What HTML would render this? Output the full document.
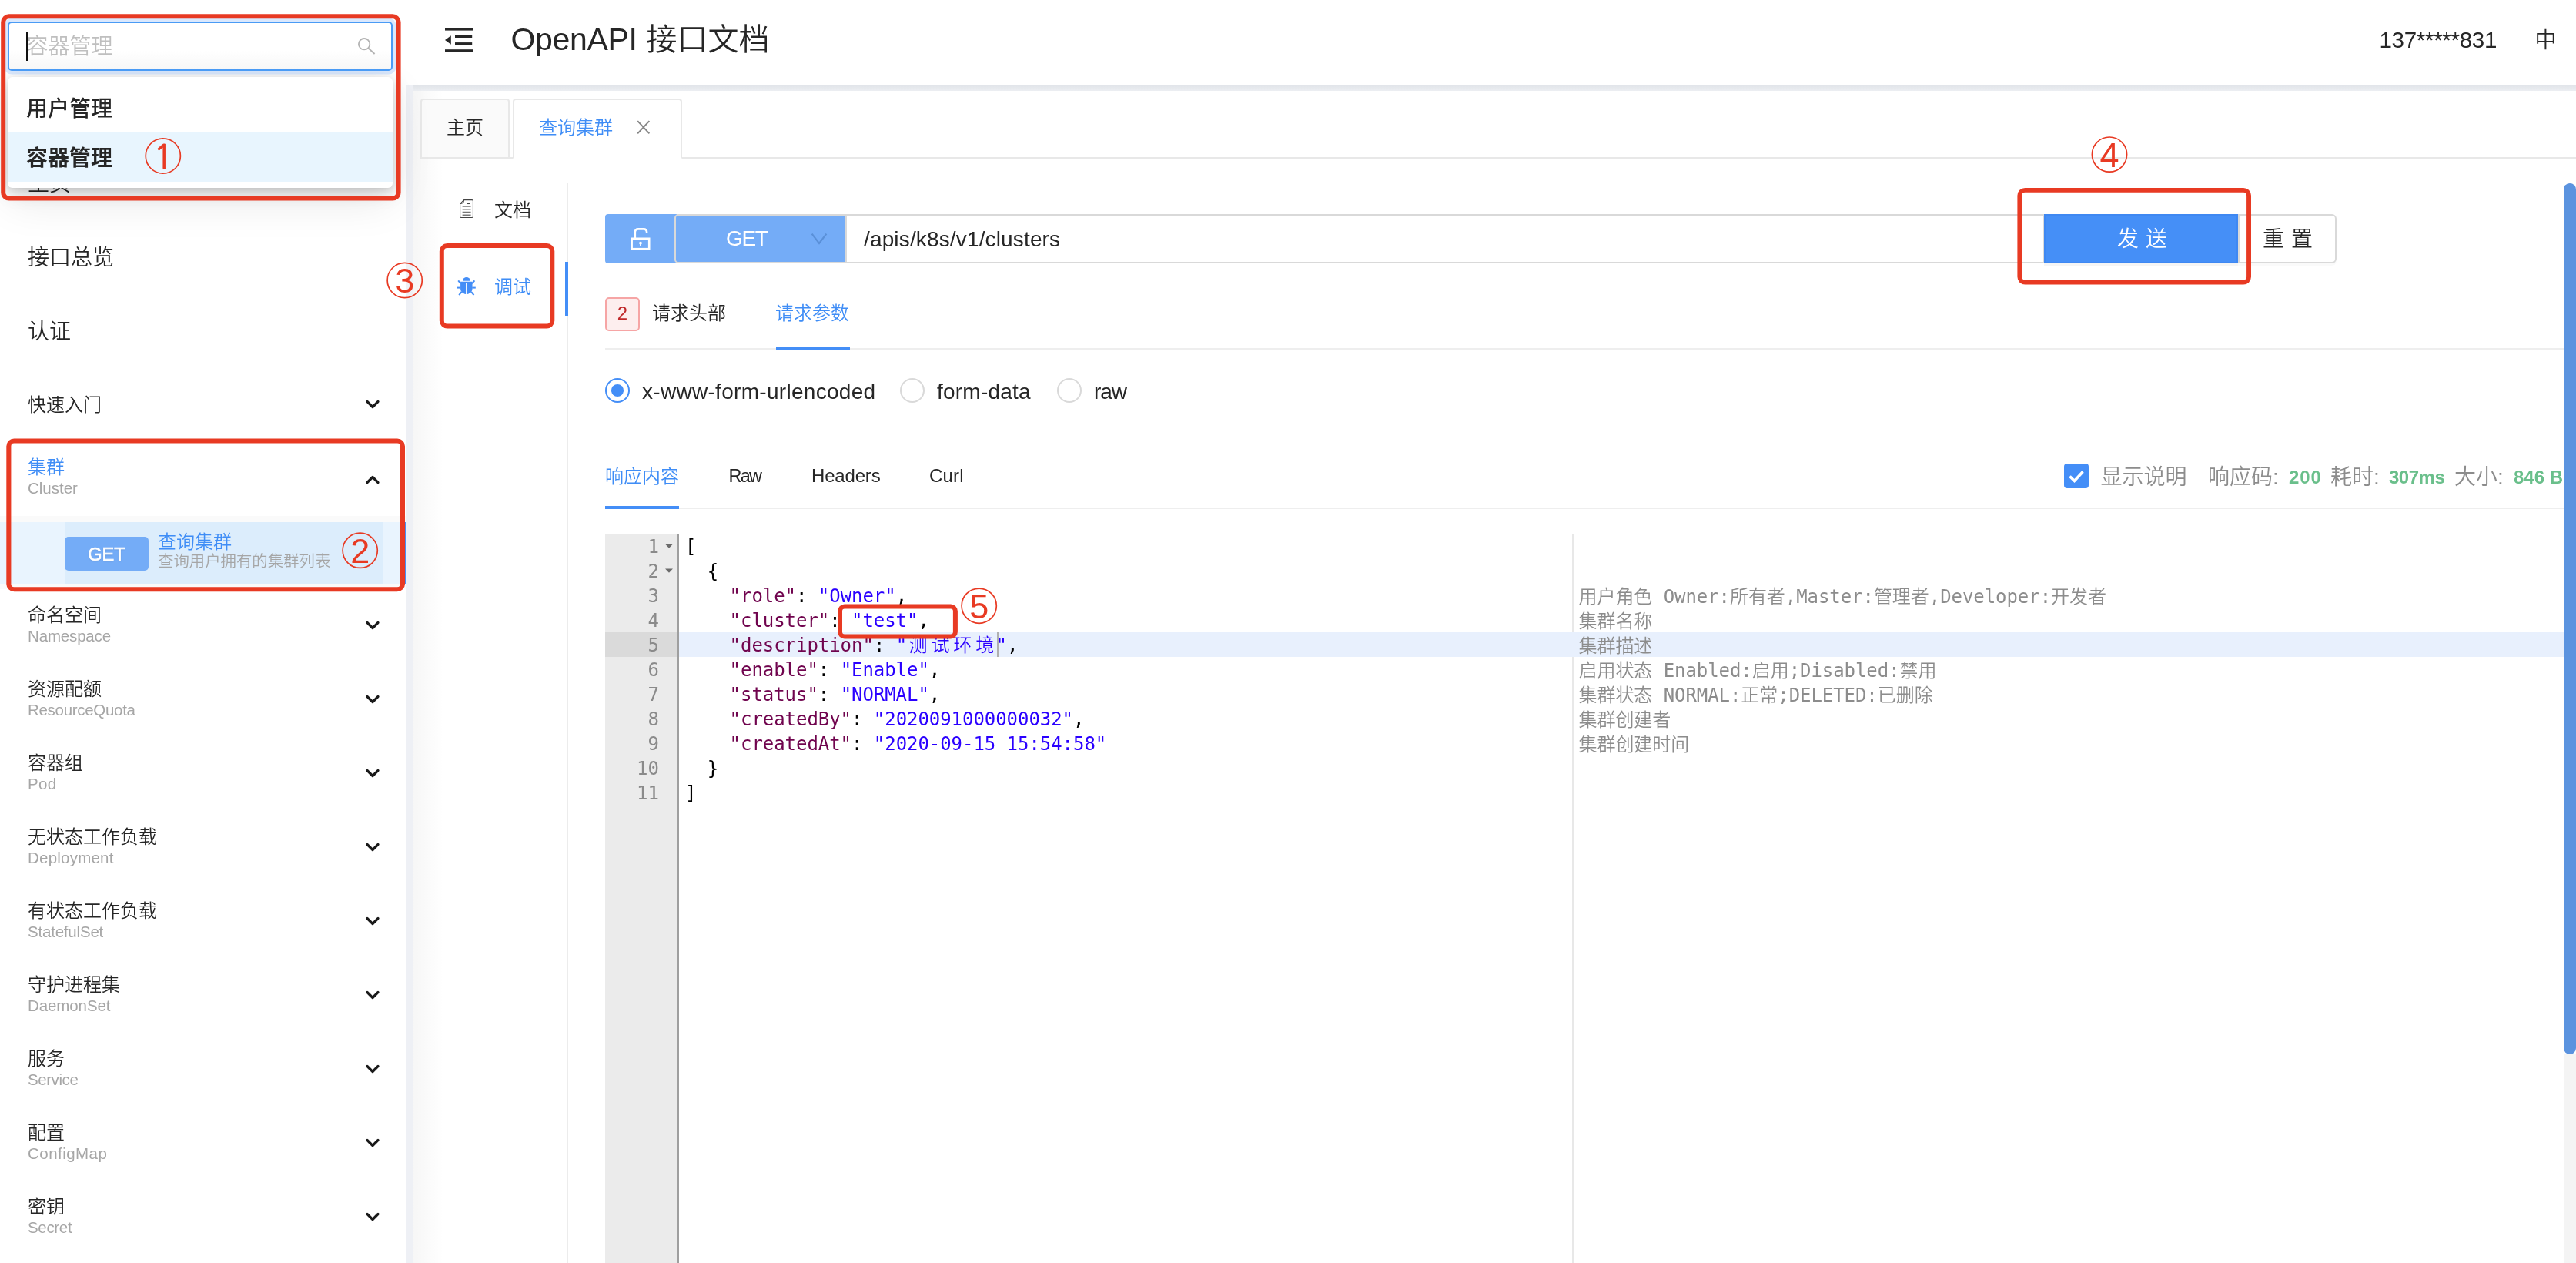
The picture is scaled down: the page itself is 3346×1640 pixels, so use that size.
<!DOCTYPE html>
<html lang="zh-CN">
<head>
<meta charset="utf-8">
<title>OpenAPI 接口文档</title>
<style>
*{box-sizing:border-box;margin:0;padding:0}
html,body{width:3346px;height:1640px;overflow:hidden;background:#fff}
#root{position:absolute;left:0;top:0;width:3346px;height:1640px;will-change:transform;font-weight:350}
body{position:relative;font-family:"Liberation Sans","Noto Sans CJK SC",sans-serif;color:#262626}
.a{position:absolute;white-space:nowrap}
.t{position:absolute;white-space:nowrap;line-height:1}
.blue{color:#3f8df6}
.red{color:#e83a23}
/* layout blocks */
#side{left:0;top:0;width:528px;height:1640px;background:#fff}
#gutterv{left:528px;top:110px;width:8px;height:1530px;background:#eef0f5}
#hdr{left:528px;top:0;width:2818px;height:110px;background:#fff}
#hstrip{left:528px;top:110px;width:2818px;height:8px;background:linear-gradient(#e0e3e8,#eceef2)}
#card{left:536px;top:118px;width:2810px;height:1522px;background:#fff}
.mt{font-size:24px;color:#262626}
.ms{font-size:20px;color:#a6a6a6}
.rbox{position:absolute;border:7px solid #e83a23;border-radius:11px}
.ln{font-size:24px;line-height:32px;color:#8a8a8a}
.cl{font-size:24px;line-height:32px;color:#000;white-space:pre;letter-spacing:-0.05px;font-family:"DejaVu Sans Mono","Noto Sans CJK SC",monospace}
.cj{display:inline-block;width:28.9px;text-align:center}
.ds{font-size:24px;line-height:32px;color:#8c8c8c;letter-spacing:-0.06px}
.mono{font-family:"DejaVu Sans Mono","Noto Sans CJK SC",monospace}
</style>
</head>
<body>
<div id="root">
<div class="a" id="side"></div>
<div class="a" id="hdr"></div>
<div class="a" id="hstrip"></div>
<div class="a" id="gutterv"></div>
<div class="a" id="card"></div>
<!--SIDEBAR-->
<div class="t " style="left:36px;top:217.9px;font-size:28px;line-height:42px;">主页</div>
<div class="t " style="left:36px;top:313.9px;font-size:28px;line-height:42px;">接口总览</div>
<div class="t " style="left:36px;top:409.9px;font-size:28px;line-height:42px;">认证</div>
<div class="t " style="left:36px;top:507.5px;font-size:24px;line-height:36px;">快速入门</div>
<svg class="a" style="left:474px;top:518px" width="20" height="14" viewBox="0 0 20 14"><path d="M3 3.5 L10 10.5 L17 3.5" fill="none" stroke="#1a1a1a" stroke-width="3.2" stroke-linecap="round" stroke-linejoin="round"/></svg>
<div class="t blue" style="left:36px;top:589.3px;font-size:24px;line-height:36px;">集群</div>
<div class="t ms" style="left:36px;top:617.8px;font-size:20.5px;line-height:31px;">Cluster</div>
<svg class="a" style="left:474px;top:616px" width="20" height="14" viewBox="0 0 20 14"><path d="M3 10.5 L10 3.5 L17 10.5" fill="none" stroke="#1a1a1a" stroke-width="3.2" stroke-linecap="round" stroke-linejoin="round"/></svg>
<div class="a" style="left:0;top:670px;width:528px;height:95px;background:#fafafa"></div>
<div class="a" style="left:0;top:678px;width:528px;height:80px;background:#e9f4fe;border-right:3px solid #4a8ff5"></div>
<div class="a" style="left:84px;top:678px;width:414px;height:80px;background:#dcedfc"></div>
<div class="a" style="left:84px;top:697px;width:109px;height:44px;background:#74acf7;border-radius:5px;color:#fff;font-size:23.5px;font-weight:400;-webkit-text-stroke:0.7px #fff;line-height:44px;text-align:center;padding-top:1px;text-shadow:0 1px 2px rgba(0,0,0,.15)">GET</div>
<div class="t blue" style="left:205px;top:685.5px;font-size:24px;line-height:36px;">查询集群</div>
<div class="t ms" style="left:205px;top:713.5px;font-size:20.4px;line-height:31px;">查询用户拥有的集群列表</div>
<div class="t " style="left:36px;top:781.3px;font-size:24px;line-height:36px;">命名空间</div>
<div class="t ms" style="left:36px;top:809.8px;font-size:20.5px;line-height:31px;letter-spacing:-0.16px">Namespace</div>
<svg class="a" style="left:474px;top:805px" width="20" height="14" viewBox="0 0 20 14"><path d="M3 3.5 L10 10.5 L17 3.5" fill="none" stroke="#1a1a1a" stroke-width="3.2" stroke-linecap="round" stroke-linejoin="round"/></svg>
<div class="t " style="left:36px;top:877.3px;font-size:24px;line-height:36px;">资源配额</div>
<div class="t ms" style="left:36px;top:905.8px;font-size:20.5px;line-height:31px;letter-spacing:-0.3px">ResourceQuota</div>
<svg class="a" style="left:474px;top:901px" width="20" height="14" viewBox="0 0 20 14"><path d="M3 3.5 L10 10.5 L17 3.5" fill="none" stroke="#1a1a1a" stroke-width="3.2" stroke-linecap="round" stroke-linejoin="round"/></svg>
<div class="t " style="left:36px;top:973.3px;font-size:24px;line-height:36px;">容器组</div>
<div class="t ms" style="left:36px;top:1001.8px;font-size:20.5px;line-height:31px;letter-spacing:0.3px">Pod</div>
<svg class="a" style="left:474px;top:997px" width="20" height="14" viewBox="0 0 20 14"><path d="M3 3.5 L10 10.5 L17 3.5" fill="none" stroke="#1a1a1a" stroke-width="3.2" stroke-linecap="round" stroke-linejoin="round"/></svg>
<div class="t " style="left:36px;top:1069.3px;font-size:24px;line-height:36px;">无状态工作负载</div>
<div class="t ms" style="left:36px;top:1097.8px;font-size:20.5px;line-height:31px;letter-spacing:0.22px">Deployment</div>
<svg class="a" style="left:474px;top:1093px" width="20" height="14" viewBox="0 0 20 14"><path d="M3 3.5 L10 10.5 L17 3.5" fill="none" stroke="#1a1a1a" stroke-width="3.2" stroke-linecap="round" stroke-linejoin="round"/></svg>
<div class="t " style="left:36px;top:1165.3px;font-size:24px;line-height:36px;">有状态工作负载</div>
<div class="t ms" style="left:36px;top:1193.8px;font-size:20.5px;line-height:31px;letter-spacing:-0.2px">StatefulSet</div>
<svg class="a" style="left:474px;top:1189px" width="20" height="14" viewBox="0 0 20 14"><path d="M3 3.5 L10 10.5 L17 3.5" fill="none" stroke="#1a1a1a" stroke-width="3.2" stroke-linecap="round" stroke-linejoin="round"/></svg>
<div class="t " style="left:36px;top:1261.3px;font-size:24px;line-height:36px;">守护进程集</div>
<div class="t ms" style="left:36px;top:1289.8px;font-size:20.5px;line-height:31px;letter-spacing:-0.1px">DaemonSet</div>
<svg class="a" style="left:474px;top:1285px" width="20" height="14" viewBox="0 0 20 14"><path d="M3 3.5 L10 10.5 L17 3.5" fill="none" stroke="#1a1a1a" stroke-width="3.2" stroke-linecap="round" stroke-linejoin="round"/></svg>
<div class="t " style="left:36px;top:1357.3px;font-size:24px;line-height:36px;">服务</div>
<div class="t ms" style="left:36px;top:1385.8px;font-size:20.5px;line-height:31px;letter-spacing:-0.43px">Service</div>
<svg class="a" style="left:474px;top:1381px" width="20" height="14" viewBox="0 0 20 14"><path d="M3 3.5 L10 10.5 L17 3.5" fill="none" stroke="#1a1a1a" stroke-width="3.2" stroke-linecap="round" stroke-linejoin="round"/></svg>
<div class="t " style="left:36px;top:1453.3px;font-size:24px;line-height:36px;">配置</div>
<div class="t ms" style="left:36px;top:1481.8px;font-size:20.5px;line-height:31px;letter-spacing:0.46px">ConfigMap</div>
<svg class="a" style="left:474px;top:1477px" width="20" height="14" viewBox="0 0 20 14"><path d="M3 3.5 L10 10.5 L17 3.5" fill="none" stroke="#1a1a1a" stroke-width="3.2" stroke-linecap="round" stroke-linejoin="round"/></svg>
<div class="t " style="left:36px;top:1549.3px;font-size:24px;line-height:36px;">密钥</div>
<div class="t ms" style="left:36px;top:1577.8px;font-size:20.5px;line-height:31px;letter-spacing:-0.32px">Secret</div>
<svg class="a" style="left:474px;top:1573px" width="20" height="14" viewBox="0 0 20 14"><path d="M3 3.5 L10 10.5 L17 3.5" fill="none" stroke="#1a1a1a" stroke-width="3.2" stroke-linecap="round" stroke-linejoin="round"/></svg>
<!--/SIDEBAR-->
<!--HEADER-->
<svg class="a" style="left:576px;top:34px" width="40" height="36" viewBox="0 0 40 36"><g fill="#262626"><rect x="2" y="2" width="36" height="3.6"/><rect x="15" y="11.8" width="22.2" height="3.2"/><rect x="15" y="21.1" width="22.2" height="3.2"/><rect x="2" y="30.2" width="36" height="3.6"/><path d="M2 18 L9.8 12.3 L9.8 23.8 Z"/></g></svg>
<div class="t" style="left:663.5px;top:21px;font-size:40px;line-height:60px;color:#262626"><span style="letter-spacing:-0.35px;font-size:41px">OpenAPI</span> <span style="margin-left:1px">接口文档</span></div>
<div class="t" style="left:3090.5px;top:30.5px;font-size:29.5px;line-height:42px;color:#262626;letter-spacing:-0.3px">137*****831</div>
<div class="t" style="left:3292.5px;top:32px;font-size:28px;line-height:42px;color:#262626">中</div>

<!--/HEADER-->
<!--TABS-->
<div class="a" id="cardshade" style="left:536px;top:118px;width:40px;height:1522px;background:linear-gradient(90deg,rgba(0,0,0,.035),rgba(0,0,0,0))"></div>
<div class="a" style="left:546px;top:204px;width:2800px;height:2px;background:#e8e8e8"></div>
<div class="a" style="left:546px;top:128px;width:116px;height:78px;background:#fafafa;border:2px solid #e8e8e8;border-radius:4px 4px 0 0"></div>
<div class="t" style="left:580px;top:148px;font-size:24px;line-height:36px;color:#262626">主页</div>
<div class="a" style="left:666px;top:128px;width:220px;height:78px;background:#fff;border:2px solid #e8e8e8;border-bottom-color:#fff;border-radius:4px 4px 0 0"></div>
<div class="t blue" style="left:700px;top:148px;font-size:24px;line-height:36px">查询集群</div>
<svg class="a" style="left:826px;top:156px" width="20" height="20" viewBox="0 0 20 20"><path d="M2.2 1.1 L17.4 17.3 M17.4 1.1 L2.2 17.3" fill="none" stroke="#858585" stroke-width="1.9"/></svg>
<!-- vertical tabs -->
<div class="a" style="left:736px;top:238px;width:2px;height:1402px;background:#ececec"></div>
<div class="a" style="left:734px;top:340px;width:4px;height:70px;background:#448ef7"></div>
<svg class="a" style="left:596px;top:258px" width="20" height="26" viewBox="0 0 20 26"><path d="M6.6 1.6 H17.2 Q18.4 1.6 18.4 2.8 V23.2 Q18.4 24.4 17.2 24.4 H2.8 Q1.6 24.4 1.6 23.2 V6.6 Z" fill="none" stroke="#444" stroke-width="1.05" stroke-linejoin="round"/><path d="M6.6 1.6 Q7 6.4 1.6 6.6" fill="none" stroke="#444" stroke-width="1"/><path d="M10 6.4 H14.6" fill="none" stroke="#444" stroke-width="1.3"/><path d="M4.6 10 H15.6 M4.6 13.7 H15.6 M4.6 17.5 H15.6 M4.6 21.2 H15.6" fill="none" stroke="#777" stroke-width="1.4"/></svg>
<div class="t" style="left:642px;top:254.6px;font-size:24px;line-height:36px;color:#262626">文档</div>
<svg class="a" style="left:593px;top:359px" width="26" height="26" viewBox="0 0 26 26"><g fill="#448ef7" stroke="none"><path d="M8.2 5.8 A4.75 4.9 0 0 1 17.7 5.8 Z"/><path d="M5.1 6.7 H20.5 V15.8 C20.5 19.6 17.6 22.4 13.8 23 V9 H12.1 V23 C8 22.4 5.1 19.6 5.1 15.8 Z"/></g><g fill="none" stroke="#448ef7" stroke-width="2"><path d="M5.6 9.4 L2.2 5.3"/><path d="M20 9.4 L23.4 5.3"/><path d="M5.4 14.6 H1"/><path d="M20.2 14.6 H24.8"/><path d="M6.6 19.8 L3.2 24.2"/><path d="M19 19.8 L22.5 24.2"/></g></svg>
<div class="t blue" style="left:642px;top:355px;font-size:24px;line-height:36px">调试</div>

<!--/TABS-->
<!--REQUEST-->
<!-- url row -->
<div class="a" style="left:1098px;top:278px;width:1558px;height:64px;background:#fff;border:2px solid #d9d9d9"></div>
<div class="t" style="left:1122px;top:289.6px;font-size:28px;line-height:42px;color:#262626;letter-spacing:0.15px">/apis/k8s/v1/clusters</div>
<div class="a" style="left:786px;top:278px;width:93px;height:64px;background:#74acf7;border-radius:4px 0 0 4px"></div>
<svg class="a" style="left:816px;top:292px" width="32" height="36" viewBox="0 0 32 36"><g fill="none" stroke="#fff" stroke-width="2.6"><rect x="4.6" y="17.8" width="22.6" height="13.4"/><path d="M8.8 17.8 V9.6 Q8.8 5.4 13 5.4 H19.9 Q24.1 5.4 24.1 9.6 V10.8"/></g><circle cx="16" cy="23.6" r="1.9" fill="#fff"/><rect x="15.1" y="24" width="1.8" height="3.2" fill="#fff"/></svg>
<div class="a" style="left:876px;top:278px;width:224px;height:64px;background:#74acf7;border:2px solid #d9d9d9;border-radius:5px 0 0 5px"></div>
<div class="t" style="left:943px;top:289px;font-size:28px;line-height:42px;color:#fff;letter-spacing:-1.4px;font-weight:400">GET</div>
<svg class="a" style="left:1052px;top:301px" width="24" height="18" viewBox="0 0 24 18"><path d="M2.6 2.6 L12 15 L21.4 2.6" fill="none" stroke="#5a90d8" stroke-width="2.2"/></svg>
<div class="a" style="left:2655px;top:278px;width:252px;height:64px;background:#458ff7;border:2px solid #3f88f2;box-shadow:0 3px 0 rgba(0,0,0,.04)"></div>
<div class="t" style="left:2750px;top:289.6px;font-size:28px;line-height:42px;color:#fff;letter-spacing:9px">发送</div>
<div class="a" style="left:2907px;top:278px;width:128px;height:64px;background:#fff;border:2px solid #d9d9d9;border-left-color:#d9d9d9;border-radius:0 6px 6px 0;box-shadow:0 3px 0 rgba(0,0,0,.02)"></div>
<div class="t" style="left:2939px;top:289.8px;font-size:28px;line-height:42px;color:#262626;letter-spacing:9px">重置</div>
<!-- request tabs -->
<div class="a" style="left:786px;top:452px;width:2544px;height:2px;background:#eeeeee"></div>
<div class="a" style="left:1008px;top:450px;width:96px;height:4px;background:#448ef7"></div>
<div class="a" style="left:786px;top:386px;width:45px;height:44px;background:#fdeeee;border:2px solid #f6a5a5;border-radius:5px"></div>
<div class="t" style="left:786px;top:387.3px;width:45px;text-align:center;font-size:24px;line-height:40px;color:#c0292b">2</div>
<div class="t" style="left:847px;top:388.7px;font-size:24px;line-height:36px;color:#262626">请求头部</div>
<div class="t blue" style="left:1007px;top:388.7px;font-size:24px;line-height:36px">请求参数</div>
<!-- radios -->
<div class="a" style="left:786px;top:491px;width:32px;height:32px;border:2px solid #448ef7;border-radius:50%"></div>
<div class="a" style="left:794px;top:499px;width:16px;height:16px;background:#448ef7;border-radius:50%"></div>
<div class="t" style="left:834px;top:487.5px;font-size:28px;line-height:42px;color:#262626;letter-spacing:0.3px">x-www-form-urlencoded</div>
<div class="a" style="left:1169px;top:491px;width:32px;height:32px;border:2px solid #d9d9d9;border-radius:50%"></div>
<div class="t" style="left:1217px;top:487.5px;font-size:28px;line-height:42px;color:#262626;letter-spacing:0.22px">form-data</div>
<div class="a" style="left:1373px;top:491px;width:32px;height:32px;border:2px solid #d9d9d9;border-radius:50%"></div>
<div class="t" style="left:1421px;top:487.5px;font-size:28px;line-height:42px;color:#262626;letter-spacing:-1.1px">raw</div>

<!--/REQUEST-->
<!--RESPONSE-->
<div class="a" style="left:786px;top:659px;width:2544px;height:2px;background:#eeeeee"></div>
<div class="a" style="left:786px;top:657px;width:96px;height:4px;background:#448ef7"></div>
<div class="t blue" style="left:786px;top:600.5px;font-size:24px;line-height:36px">响应内容</div>
<div class="t" style="left:946.5px;top:600px;font-size:24px;line-height:36px;color:#262626;font-size:23.4px;letter-spacing:-1.7px">Raw</div>
<div class="t" style="left:1054px;top:600px;font-size:24px;line-height:36px;color:#262626;letter-spacing:-0.17px">Headers</div>
<div class="t" style="left:1207px;top:600px;font-size:24px;line-height:36px;color:#262626;letter-spacing:0.2px">Curl</div>
<div class="a" style="left:2681px;top:602px;width:32px;height:32px;background:#448ef7;border-radius:4px"></div>
<svg class="a" style="left:2681px;top:602px" width="32" height="32" viewBox="0 0 32 32"><path d="M7.5 16.5 L13.5 22.5 L24.5 10.5" fill="none" stroke="#fff" stroke-width="3.6"/></svg>
<div class="t" style="left:2728.5px;top:598.7px;font-size:28px;line-height:42px;color:#8c8c8c">显示说明</div>
<div class="t" style="left:2868px;top:598.7px;font-size:28px;line-height:42px;color:#8c8c8c">响应码:</div>
<div class="t" style="left:2973px;top:601.5px;font-size:24px;line-height:36px;color:#6abf8b;font-weight:bold;letter-spacing:0.9px">200</div>
<div class="t" style="left:3027px;top:598.7px;font-size:28px;line-height:42px;color:#8c8c8c">耗时:</div>
<div class="t" style="left:3103px;top:601.5px;font-size:24px;line-height:36px;color:#6abf8b;font-weight:bold;letter-spacing:-0.5px">307ms</div>
<div class="t" style="left:3188px;top:598.7px;font-size:28px;line-height:42px;color:#8c8c8c">大小:</div>
<div class="t" style="left:3265px;top:601.5px;font-size:24px;line-height:36px;color:#6abf8b;font-weight:bold">846 B</div>
<div class="a" style="left:786px;top:693px;width:96px;height:947px;background:#ebebeb;border-right:2px solid #9f9f9f"></div>
<div class="a" style="left:786px;top:821px;width:94px;height:32px;background:#dadada"></div>
<div class="a" style="left:2042px;top:693px;width:2px;height:947px;background:#e8e8e8"></div>
<div class="a" style="left:882px;top:821px;width:2448px;height:32px;background:#e8f0fd"></div>
<div class="t mono ln" style="left:786px;top:694px;width:70px;text-align:right">1</div>
<pre class="t mono cl" style="left:890px;top:694px">[</pre>
<div class="t mono ln" style="left:786px;top:726px;width:70px;text-align:right">2</div>
<pre class="t mono cl" style="left:890px;top:726px">  {</pre>
<div class="t mono ln" style="left:786px;top:758px;width:70px;text-align:right">3</div>
<pre class="t mono cl" style="left:890px;top:758px">    <span style="color:#70044e">"role"</span>: <span style="color:#2a00ff">"Owner"</span>,</pre>
<div class="t mono ln" style="left:786px;top:790px;width:70px;text-align:right">4</div>
<pre class="t mono cl" style="left:890px;top:790px">    <span style="color:#70044e">"cluster"</span>: <span style="color:#2a00ff">"test"</span>,</pre>
<div class="t mono ln" style="left:786px;top:822px;width:70px;text-align:right">5</div>
<pre class="t mono cl" style="left:890px;top:822px">    <span style="color:#70044e">"description"</span>: <span style="color:#2a00ff">"<span class="cj">测</span><span class="cj">试</span><span class="cj">环</span><span class="cj">境</span>"</span>,</pre>
<div class="t mono ln" style="left:786px;top:854px;width:70px;text-align:right">6</div>
<pre class="t mono cl" style="left:890px;top:854px">    <span style="color:#70044e">"enable"</span>: <span style="color:#2a00ff">"Enable"</span>,</pre>
<div class="t mono ln" style="left:786px;top:886px;width:70px;text-align:right">7</div>
<pre class="t mono cl" style="left:890px;top:886px">    <span style="color:#70044e">"status"</span>: <span style="color:#2a00ff">"NORMAL"</span>,</pre>
<div class="t mono ln" style="left:786px;top:918px;width:70px;text-align:right">8</div>
<pre class="t mono cl" style="left:890px;top:918px">    <span style="color:#70044e">"createdBy"</span>: <span style="color:#2a00ff">"2020091000000032"</span>,</pre>
<div class="t mono ln" style="left:786px;top:950px;width:70px;text-align:right">9</div>
<pre class="t mono cl" style="left:890px;top:950px">    <span style="color:#70044e">"createdAt"</span>: <span style="color:#2a00ff">"2020-09-15 15:54:58"</span></pre>
<div class="t mono ln" style="left:786px;top:982px;width:70px;text-align:right">10</div>
<pre class="t mono cl" style="left:890px;top:982px">  }</pre>
<div class="t mono ln" style="left:786px;top:1014px;width:70px;text-align:right">11</div>
<pre class="t mono cl" style="left:890px;top:1014px">]</pre>
<svg class="a" style="left:863px;top:705px" width="12" height="8" viewBox="0 0 12 8"><path d="M1 1.5 H11 L6 6.8 Z" fill="#6b6b6b"/></svg>
<svg class="a" style="left:863px;top:737px" width="12" height="8" viewBox="0 0 12 8"><path d="M1 1.5 H11 L6 6.8 Z" fill="#6b6b6b"/></svg>
<div class="a" style="left:1295px;top:821px;width:3px;height:32px;background:#b0b0b0"></div>
<div class="t mono ds" style="left:2050.5px;top:758.6px">用户角色 Owner:所有者,Master:管理者,Developer:开发者</div>
<div class="t mono ds" style="left:2050.5px;top:790.6px">集群名称</div>
<div class="t mono ds" style="left:2050.5px;top:822.6px">集群描述</div>
<div class="t mono ds" style="left:2050.5px;top:854.6px">启用状态 Enabled:启用;Disabled:禁用</div>
<div class="t mono ds" style="left:2050.5px;top:886.6px">集群状态 NORMAL:正常;DELETED:已删除</div>
<div class="t mono ds" style="left:2050.5px;top:918.6px">集群创建者</div>
<div class="t mono ds" style="left:2050.5px;top:950.6px">集群创建时间</div>
<div class="a" style="left:3330px;top:238px;width:16px;height:1402px;background:linear-gradient(#fff 0,#fff 1131px,#f4f4f4 1131px)"></div>
<div class="a" style="left:3330px;top:238px;width:16px;height:1131px;background:#5b93df;border-radius:8px"></div>
<!--/RESPONSE-->
<!--DROPDOWN-->
<!-- search select -->
<div class="a" style="left:10px;top:100px;width:500px;height:144px;background:#fff;border-radius:6px;box-shadow:0 6px 24px rgba(0,0,0,.15),0 3px 8px rgba(0,0,0,.09),0 18px 56px rgba(0,0,0,.09)"></div>
<div class="a" style="left:10px;top:172px;width:500px;height:64px;background:#e8f5fe"></div>
<div class="t" style="left:34px;top:120.7px;font-size:28px;line-height:42px;color:#262626;font-weight:500">用户管理</div>
<div class="t" style="left:34px;top:185px;font-size:28px;line-height:42px;color:#262626;font-weight:700">容器管理</div>
<div class="a" style="left:10px;top:28px;width:500px;height:64px;background:linear-gradient(#fff 60%,#f7f7f7);border:2px solid #4a9bf5;border-radius:5px;box-shadow:0 0 0 4.4px rgba(70,140,245,.2)"></div>
<div class="t" style="left:34.5px;top:39.5px;font-size:28px;line-height:42px;color:#bfbfbf">容器管理</div>
<div class="a" style="left:34px;top:41px;width:2px;height:38px;background:#111"></div>
<svg class="a" style="left:462px;top:47px" width="28" height="28" viewBox="0 0 28 28"><circle cx="11.1" cy="10.2" r="7.2" fill="none" stroke="#b3b3b3" stroke-width="1.8"/><path d="M16.4 15.5 L24.6 23" stroke="#b3b3b3" stroke-width="1.9" fill="none"/></svg>

<!--/DROPDOWN-->
<!--ANNOT-->
<svg class="a" style="left:-1px;top:16px" width="525" height="248"><rect x="5.20" y="5.30" width="513.40" height="236.30" rx="7.50" fill="none" stroke="#e83a23" stroke-width="6.0"/></svg>
<svg class="a" style="left:6px;top:567px" width="523" height="204"><rect x="5.35" y="5.45" width="511.60" height="192.80" rx="6.95" fill="none" stroke="#e83a23" stroke-width="6.1"/></svg>
<svg class="a" style="left:568px;top:314px" width="155" height="116"><rect x="5.80" y="5.10" width="143.50" height="104.30" rx="7.00" fill="none" stroke="#e83a23" stroke-width="6.0"/></svg>
<svg class="a" style="left:2618px;top:241px" width="309" height="131"><rect x="5.35" y="5.85" width="297.70" height="119.80" rx="7.05" fill="none" stroke="#e83a23" stroke-width="5.9"/></svg>
<svg class="a" style="left:1086px;top:782px" width="161" height="50"><rect x="5.00" y="5.60" width="149.90" height="38.80" rx="6.00" fill="none" stroke="#e83a23" stroke-width="6.0"/></svg>
<svg class="a" style="left:181px;top:172px" width="60" height="60"><circle cx="30.80" cy="30.50" r="22.6" fill="none" stroke="#e83a23" stroke-width="1.7"/><text x="18.10" y="46.80" style="font-family:'NanumGothic',sans-serif;font-weight:400;font-size:43px;fill:#e83a23;stroke:#e83a23;stroke-width:0.8px">1</text></svg>
<svg class="a" style="left:437px;top:684px" width="60" height="60"><circle cx="30.70" cy="30.80" r="22.6" fill="none" stroke="#e83a23" stroke-width="1.7"/><text x="30.70" y="47.00" text-anchor="middle" style="font-family:'Liberation Sans',sans-serif;font-weight:400;font-size:45px;fill:#e83a23">2</text></svg>
<svg class="a" style="left:495px;top:334px" width="60" height="60"><circle cx="30.70" cy="30.00" r="22.6" fill="none" stroke="#e83a23" stroke-width="1.7"/><text x="30.70" y="46.20" text-anchor="middle" style="font-family:'Liberation Sans',sans-serif;font-weight:400;font-size:45px;fill:#e83a23">3</text></svg>
<svg class="a" style="left:2710px;top:170px" width="60" height="60"><circle cx="30.00" cy="30.60" r="22.6" fill="none" stroke="#e83a23" stroke-width="1.7"/><text x="30.00" y="46.80" text-anchor="middle" style="font-family:'Liberation Sans',sans-serif;font-weight:400;font-size:45px;fill:#e83a23">4</text></svg>
<svg class="a" style="left:1241px;top:756px" width="60" height="60"><circle cx="30.70" cy="30.70" r="22.6" fill="none" stroke="#e83a23" stroke-width="1.7"/><text x="30.70" y="46.90" text-anchor="middle" style="font-family:'Liberation Sans',sans-serif;font-weight:400;font-size:45px;fill:#e83a23">5</text></svg>
<!--/ANNOT-->
</div>
</body>
</html>
